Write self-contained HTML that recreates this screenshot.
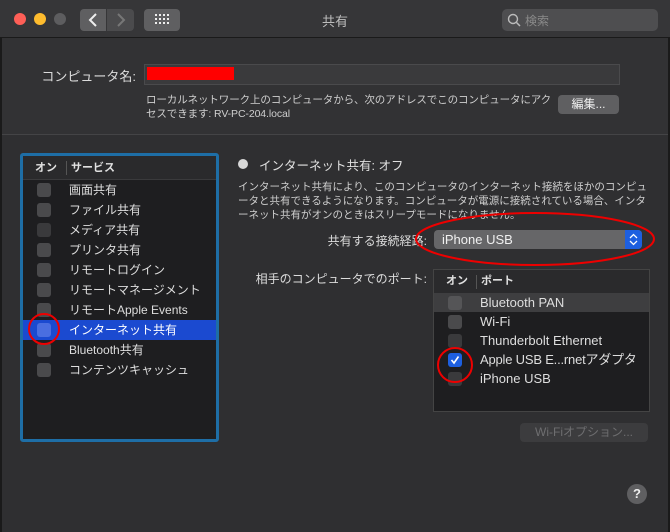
<!DOCTYPE html><html><head><meta charset="utf-8"><style>
*{box-sizing:border-box;margin:0;padding:0}
body{width:670px;height:532px;background:#323234;font-family:"Liberation Sans","Noto Sans CJK JP",sans-serif;color:#dcdcdc;position:relative;overflow:hidden;font-size:12px}
.a{position:absolute}
.cb{position:absolute;width:14px;height:14px;border-radius:3px;background:#4a4a4c}
.row{position:absolute;left:0;right:0;height:20px;line-height:20px;font-size:12px;color:#dedede}
</style></head><body>
<div class="a" style="left:0;top:0;width:670px;height:38px;background:#363638;border-bottom:1px solid #1a1a1a"></div>
<div class="a" style="left:14px;top:13px;width:12px;height:12px;border-radius:50%;background:#fe5f57"></div>
<div class="a" style="left:34px;top:13px;width:12px;height:12px;border-radius:50%;background:#febc2e"></div>
<div class="a" style="left:54px;top:13px;width:12px;height:12px;border-radius:50%;background:#5d5d5f"></div>
<div class="a" style="left:80px;top:9px;width:26px;height:22px;background:#5f5f61;border-radius:4px 0 0 4px"></div>
<div class="a" style="left:107px;top:9px;width:27px;height:22px;background:#4b4b4d;border-radius:0 4px 4px 0"></div>
<svg class="a" style="left:80px;top:9px" width="54" height="22"><path d="M16 5 L10 11 L16 17" stroke="#eee" stroke-width="2" fill="none"/><path d="M38 5 L44 11 L38 17" stroke="#777" stroke-width="2" fill="none"/></svg>
<div class="a" style="left:144px;top:9px;width:36px;height:22px;background:#5f5f61;border-radius:4px"></div>
<svg class="a" style="left:155px;top:13px" width="14" height="14" fill="#eee"><rect x="0" y="1" width="2" height="2"/><rect x="4" y="1" width="2" height="2"/><rect x="8" y="1" width="2" height="2"/><rect x="12" y="1" width="2" height="2"/><rect x="0" y="5" width="2" height="2"/><rect x="4" y="5" width="2" height="2"/><rect x="8" y="5" width="2" height="2"/><rect x="12" y="5" width="2" height="2"/><rect x="0" y="9" width="2" height="2"/><rect x="4" y="9" width="2" height="2"/><rect x="8" y="9" width="2" height="2"/><rect x="12" y="9" width="2" height="2"/></svg>
<div class="a" style="left:0;width:670px;top:11px;text-align:center;font-size:13px;color:#bdbdbd">共有</div>
<div class="a" style="left:502px;top:9px;width:156px;height:22px;background:#4e4e50;border-radius:5px"></div>
<svg class="a" style="left:507px;top:13px" width="14" height="14"><circle cx="6" cy="6" r="4.5" stroke="#bbb" stroke-width="1.4" fill="none"/><path d="M9.5 9.5 L13 13" stroke="#bbb" stroke-width="1.5"/></svg>
<div class="a" style="left:525px;top:12px;font-size:12px;color:#8a8a8a">検索</div>

<div class="a" style="left:40px;top:66px;width:96px;text-align:right;font-size:13px;color:#dcdcdc">コンピュータ名:</div>
<div class="a" style="left:144px;top:64px;width:476px;height:21px;background:#3a3a3c;border:1px solid #4a4a4c"></div>
<div class="a" style="left:147px;top:67px;width:87px;height:13px;background:#ff0000"></div>
<div class="a" style="left:146px;top:93px;font-size:10.5px;line-height:14px;color:#cfcfcf;width:410px;letter-spacing:-0.1px">ローカルネットワーク上のコンピュータから、次のアドレスでこのコンピュータにアク<br>セスできます: RV-PC-204.local</div>
<div class="a" style="left:558px;top:95px;width:61px;height:19px;background:#5f5f61;border-radius:4px;text-align:center;line-height:19px;font-size:12px;color:#eee">編集...</div>
<div class="a" style="left:0;top:134px;width:670px;height:1px;background:#444446"></div>
<div class="a" style="left:0;top:135px;width:670px;height:397px;background:#2f2f31"></div>
<div class="a" style="left:0;top:38px;width:2px;height:494px;background:#1a1a1a"></div>
<div class="a" style="left:668px;top:38px;width:2px;height:494px;background:#1a1a1a"></div>

<div class="a" style="left:20px;top:153px;width:199px;height:289px;border:3px solid #1e6ea6;border-radius:3px;background:#1e1e20">
<div class="a" style="left:0;top:0;right:0;height:24px;background:#2a2a2c;border-bottom:1px solid #3a3a3c;font-size:11px;font-weight:bold;line-height:24px;color:#e0e0e0"><span class="a" style="left:12px">オン</span><span class="a" style="left:43px;top:5px;width:1px;height:14px;background:#555"></span><span class="a" style="left:48px">サービス</span></div>
<div class="row" style="top:24px"><span class="cb" style="left:14px;top:3px"></span><span class="a" style="left:46px">画面共有</span></div>
<div class="row" style="top:44px"><span class="cb" style="left:14px;top:3px"></span><span class="a" style="left:46px">ファイル共有</span></div>
<div class="row" style="top:64px"><span class="cb" style="left:14px;top:3px;background:#3a3a3c"></span><span class="a" style="left:46px">メディア共有</span></div>
<div class="row" style="top:84px"><span class="cb" style="left:14px;top:3px"></span><span class="a" style="left:46px">プリンタ共有</span></div>
<div class="row" style="top:104px"><span class="cb" style="left:14px;top:3px"></span><span class="a" style="left:46px">リモートログイン</span></div>
<div class="row" style="top:124px"><span class="cb" style="left:14px;top:3px"></span><span class="a" style="left:46px">リモートマネージメント</span></div>
<div class="row" style="top:144px"><span class="cb" style="left:14px;top:3px"></span><span class="a" style="left:46px">リモートApple Events</span></div>
<div class="row" style="top:164px;background:#1b4ad0;color:#fff"><span class="cb" style="left:14px;top:3px;background:#4a6ee0"></span><span class="a" style="left:46px">インターネット共有</span></div>
<div class="row" style="top:184px"><span class="cb" style="left:14px;top:3px"></span><span class="a" style="left:46px">Bluetooth共有</span></div>
<div class="row" style="top:204px"><span class="cb" style="left:14px;top:3px"></span><span class="a" style="left:46px">コンテンツキャッシュ</span></div>
</div>

<div class="a" style="left:238px;top:159px;width:10px;height:10px;border-radius:50%;background:#d8d8d8"></div>
<div class="a" style="left:259px;top:155px;font-size:12.5px;color:#e0e0e0">インターネット共有: オフ</div>
<div class="a" style="left:238px;top:180px;width:412px;font-size:10.5px;line-height:14px;color:#cfcfcf">インターネット共有により、このコンピュータのインターネット接続をほかのコンピュータと共有できるようになります。コンピュータが電源に接続されている場合、インターネット共有がオンのときはスリープモードになりません。</div>
<div class="a" style="left:250px;top:232px;width:177px;text-align:right;font-size:12px;color:#dcdcdc">共有する接続経路:</div>
<div class="a" style="left:434px;top:230px;width:208px;height:19px;background:#666668;border-radius:4px"></div>
<div class="a" style="left:625px;top:230px;width:17px;height:19px;background:#1d5fe0;border-radius:0 4px 4px 0"></div>
<svg class="a" style="left:628px;top:232px" width="11" height="15"><path d="M2 6 L5.5 2.5 L9 6 M2 9 L5.5 12.5 L9 9" stroke="#fff" stroke-width="1.3" fill="none"/></svg>
<div class="a" style="left:442px;top:231px;font-size:13px;color:#f0f0f0;line-height:18px">iPhone USB</div>
<div class="a" style="left:230px;top:270px;width:197px;text-align:right;font-size:12px;color:#dcdcdc">相手のコンピュータでのポート:</div>
<div class="a" style="left:433px;top:269px;width:217px;height:143px;border:1px solid #444;background:#1e1e20">
<div class="a" style="left:0;top:0;right:0;height:23px;background:#2a2a2c;font-size:11px;font-weight:bold;line-height:23px;color:#e0e0e0"><span class="a" style="left:12px">オン</span><span class="a" style="left:42px;top:5px;width:1px;height:14px;background:#555"></span><span class="a" style="left:47px">ポート</span></div>
<div class="row" style="top:23px;height:19px;line-height:19px;background:#3e3e40;font-size:13px"><span class="cb" style="left:14px;top:3px;background:#555557"></span><span class="a" style="left:46px">Bluetooth PAN</span></div>
<div class="row" style="top:42px;height:19px;line-height:19px;font-size:13px"><span class="cb" style="left:14px;top:3px"></span><span class="a" style="left:46px">Wi-Fi</span></div>
<div class="row" style="top:61px;height:19px;line-height:19px;font-size:13px"><span class="cb" style="left:14px;top:3px;background:#3a3a3c"></span><span class="a" style="left:46px">Thunderbolt Ethernet</span></div>
<div class="row" style="top:80px;height:19px;line-height:19px;font-size:13px"><span class="cb" style="left:14px;top:3px;background:#1d5fe0"></span><svg class="a" style="left:16px;top:5px" width="10" height="10"><path d="M1.5 5 L4 8 L8.5 1.5" stroke="#fff" stroke-width="1.6" fill="none"/></svg><span class="a" style="left:46px;letter-spacing:-0.2px">Apple USB E...rnetアダプタ</span></div>
<div class="row" style="top:99px;height:19px;line-height:19px;font-size:13px"><span class="cb" style="left:14px;top:3px;background:#3a3a3c"></span><span class="a" style="left:46px">iPhone USB</span></div>
</div>
<div class="a" style="left:520px;top:423px;width:128px;height:19px;background:#3c3c3e;border-radius:4px;text-align:center;line-height:19px;font-size:12px;color:#6e6e70">Wi-Fiオプション...</div>
<div class="a" style="left:627px;top:484px;width:20px;height:20px;border-radius:50%;background:#5f5f61;color:#eee;text-align:center;line-height:20px;font-size:13px;font-weight:bold">?</div>
<svg class="a" style="left:0;top:0" width="670" height="532"><g stroke="#e00" stroke-width="2" fill="none"><circle cx="44" cy="329" r="15"/><ellipse cx="535" cy="239" rx="119" ry="26"/><circle cx="455" cy="365" r="17"/></g></svg>
</body></html>
